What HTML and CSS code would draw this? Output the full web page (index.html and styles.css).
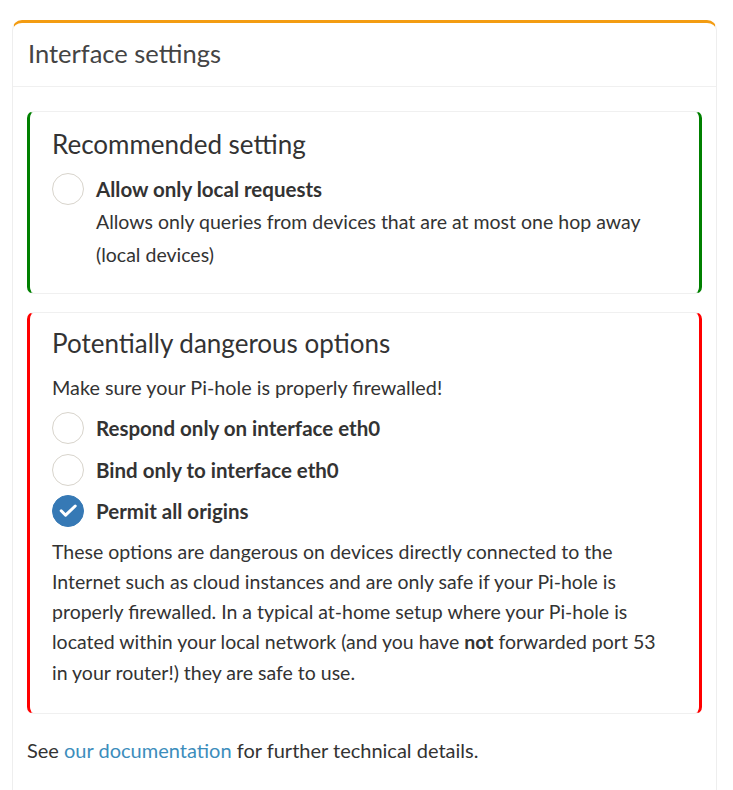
FILE: index.html
```html
<!DOCTYPE html>
<html>
<head>
	<title>Interface settings</title>
	<link rel="stylesheet" href="styles.css">
</head>
<body>
	<div class="box">
		<div class="box-header">
			<h3 class="box-title">Interface settings</h3>
		</div>
		<div class="box-body">

			<div class="panel panel-ok">
				<h4>Recommended setting</h4>
				<div class="option first">
					<span class="radio"></span>
					<div>
						<b>Allow only local requests</b>
						<p class="desc">Allows only queries from devices that are at most one hop away (local devices)</p>
					</div>
				</div>
			</div>

			<div class="panel panel-danger">
				<h4>Potentially dangerous options</h4>
				<p class="note">Make sure your Pi-hole is properly firewalled!</p>
				<div class="option">
					<span class="radio"></span>
					<b>Respond only on interface eth0</b>
				</div>
				<div class="option">
					<span class="radio"></span>
					<b>Bind only to interface eth0</b>
				</div>
				<div class="option">
					<span class="radio checked">
						<svg width="30" height="30" viewBox="1 1 30 30"><path d="M9.2 15.8 L13.6 20.2 L23.2 11" fill="none" stroke="#fff" stroke-width="3" stroke-linecap="round" stroke-linejoin="round"/></svg>
					</span>
					<b>Permit all origins</b>
				</div>
				<p class="warn">These options are dangerous on devices directly connected to the Internet such as cloud instances and are only safe if your Pi-hole is properly firewalled. In a typical at-home setup where your Pi-hole is located within your local network (and you have <b>not</b> forwarded port 53 in your router!) they are safe to use.</p>
			</div>

			<p class="see">See <a href="#">our documentation</a> for further technical details.</p>
		</div>
	</div>
</body>
</html>
```

FILE: styles.css
```css
html {font-family: "Lato", "Liberation Sans", sans-serif; color:#333;}
body {margin:0; padding:20px 16px 0 12px; background:#fff;}
.box {border-top:3px solid #f39c12; border-left:1px solid #eee; border-right:1px solid #eee;
	border-radius:10px 10px 0 0; background:#fff; height:800px;}
.box-header {padding:0 15px 4px 15px; height:59px; display:flex; align-items:center;
	border-bottom:1px solid #f0f0f0;}
.box-title {margin:0; font-size:25.5px; font-weight:normal; color:#444;}
.box-body {padding:24px 14px 0 14px;}
.panel {border:1px solid #f0f0f0; border-radius:7px; padding:14px 22px 22px 22px;}
.panel-ok {border-left:3px solid #008000; border-right:3px solid #008000; margin-bottom:18px;}
.panel-danger {border-left:3px solid #ff0000; border-right:3px solid #ff0000;
	padding-top:12px; padding-bottom:25px; margin-bottom:21px;}
h4 {margin:0 0 11px 0; font-size:26px; line-height:36px; font-weight:normal; color:#333;}
.option {display:flex; align-items:flex-start; gap:12px; font-size:20.5px; line-height:32px;
	margin-bottom:9.5px;}
.option.first {margin-top:1px; margin-bottom:0;}
.radio {flex:none; width:30px; height:30px; border:1px solid #d8d4cc; border-radius:50%;
	background:#fff; display:flex; align-items:center; justify-content:center;}
.radio.checked {background:#3679b5; border-color:#3679b5;}
.desc {margin:0; font-size:19.5px; line-height:33px;}
.note {margin:12px 0 10px 0; font-size:19.8px; line-height:30px;}
h4 + .note {margin-top:1px;}
.warn {margin:1px 0 0 0; max-width:612px; font-size:19.5px; line-height:30.3px;}
.see {margin:0; font-size:20px; line-height:30px;}
a {color:#3c8dbc; text-decoration:none;}
```
